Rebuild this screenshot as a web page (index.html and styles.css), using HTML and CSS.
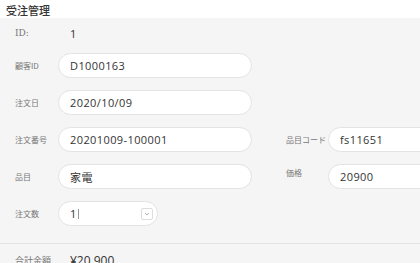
FILE: index.html
```html
<!DOCTYPE html>
<html lang="ja">
<head>
    <meta charset="UTF-8">
    <meta name="viewport" content="width=device-width, initial-scale=1.0">
    <title>受注管理</title>
    <link rel="stylesheet" href="styles.css">
</head>
<body>
    <header class="page-head">
        <h1>受注管理</h1>
    </header>
    <main class="order">
        <div class="id-row">
            <span class="label id-label">ID:</span>
            <span class="id-value">1</span>
        </div>
        <div class="fields">
            <label class="label" for="customer">顧客ID</label>
            <input class="field" id="customer" type="text" value="D1000163">

            <label class="label row2" for="date">注文日</label>
            <input class="field row2" id="date" type="text" value="2020/10/09">

            <label class="label row3" for="number">注文番号</label>
            <input class="field row3" id="number" type="text" value="20201009-100001">
            <label class="label row3 right-label" for="code">品目コード</label>
            <input class="field row3 right-field" id="code" type="text" value="fs11651">

            <label class="label row4" for="item">品目</label>
            <input class="field row4" id="item" type="text" value="家電">
            <label class="label row4 right-label top" for="price">価格</label>
            <input class="field row4 right-field" id="price" type="text" value="20900">

            <label class="label row5" for="qty">注文数</label>
            <div class="field select row5">
                <span class="select-value">1<span class="caret"></span></span>
                <span class="select-btn">
                    <svg width="6" height="4" viewBox="0 0 6 4"><path d="M1 1 L3 3 L5 1" fill="none" stroke="#999" stroke-width="0.8"/></svg>
                </span>
            </div>
        </div>
        <div class="total">
            <span class="label">合計金額</span>
            <span class="total-value">¥20,900</span>
        </div>
    </main>
</body>
</html>
```

FILE: styles.css
```css
body {
    margin: 0;
    background: #f5f5f5;
    font-family: "Open Sans", "Noto Sans CJK JP", sans-serif;
    color: #333;
    overflow: hidden;
}
.page-head {
    background: #fff;
    height: 18px;
    padding: 0 6px;
}
.page-head h1 {
    margin: 0;
    font-family: "Noto Sans CJK JP", sans-serif;
    font-size: 11px;
    font-weight: 500;
    line-height: 20px;
    color: #333;
}
.order {
    padding: 7px 0 0 15px;
}
.id-row {
    display: flex;
    align-items: center;
    height: 16px;
    margin-bottom: 12px;
}
.label {
    font-family: "Noto Sans CJK JP", sans-serif;
    font-size: 8px;
    color: #777;
    align-self: center;
}
.id-label {
    width: 55px;
    font-family: "DejaVu Serif", serif;
    font-size: 9px;
}
.id-value {
    font-size: 11px;
}
.fields {
    display: grid;
    grid-template-columns: 43px 194px 34px 42px 194px;
    grid-auto-rows: 25px;
    row-gap: 12px;
}
.fields .label {
    grid-column: 1;
}
.field {
    grid-column: 2;
    box-sizing: border-box;
    height: 25px;
    width: 100%;
    margin: 0;
    padding: 0 11px;
    border: 1px solid #e3e3e3;
    border-radius: 13px;
    background: #fff;
    font-family: "Open Sans", "Noto Sans CJK JP", sans-serif;
    font-size: 11px;
    letter-spacing: 0.4px;
    color: #333;
    outline: none;
}
.row2 { grid-row: 2; }
.row3 { grid-row: 3; }
.row4 { grid-row: 4; }
.row5 { grid-row: 5; }
.fields .right-label {
    grid-column: 4;
}
.fields .right-label.top {
    align-self: start;
    padding-top: 3px;
}
.right-field {
    grid-column: 5;
}
.select {
    width: 100px;
    display: flex;
    align-items: center;
    justify-content: space-between;
    padding-right: 4px;
}
.select-value {
    display: flex;
    align-items: center;
}
.caret {
    display: inline-block;
    width: 1px;
    height: 10px;
    margin-left: 1px;
    background: #999;
}
.select-btn {
    width: 10px;
    height: 10px;
    border: 1px solid #ddd;
    border-radius: 2px;
    display: flex;
    align-items: center;
    justify-content: center;
}
.total {
    margin: 17px 0 0 -15px;
    padding: 8px 0 0 15px;
    border-top: 1px solid #e3e3e3;
    display: flex;
    align-items: center;
}
.total .label {
    width: 55px;
    font-size: 9px;
}
.total-value {
    font-size: 12px;
    font-weight: 500;
}
```
